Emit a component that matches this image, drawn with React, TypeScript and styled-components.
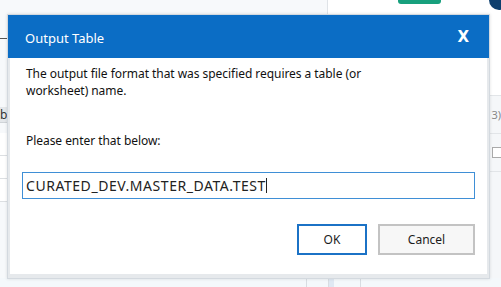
import React from "react";
import styled, {createGlobalStyle} from "styled-components";

const GlobalStyle = createGlobalStyle`
  html, body {
    margin: 0;
    padding: 0;
    background: #f5f8fb;
  }
  * {
    box-sizing: border-box;
  }
`

export default function App() {
    return (
        <>
            <GlobalStyle/>
            <Page>
                <Workspace>
                    <LeftPane>
                        <Dash/>
                        <GridHead>b</GridHead>
                        <GridRow/>
                        <GridRow/>
                        <GridRow/>
                    </LeftPane>
                    <RightPane>
                        <RightTop>
                            <RunButton/>
                            <Avatar/>
                        </RightTop>
                        <RightList>
                            <ListRow>3)</ListRow>
                            <ListRow><Check/></ListRow>
                        </RightList>
                    </RightPane>
                </Workspace>
                <BottomBar>
                    <BottomSpacer/>
                    <BottomCell width={22}/>
                    <BottomTab/>
                    <BottomCell width={27}/>
                </BottomBar>

                <Dialog>
                    <TitleBar>
                        <Title>Output Table</Title>
                        <Close>X</Close>
                    </TitleBar>
                    <Body>
                        <Message>
                            The output file format that was specified requires a table (or
                            <br/>
                            worksheet) name.
                        </Message>
                        <Prompt>Please enter that below:</Prompt>
                        <NameInput>
                            CURATED_DEV.MASTER_DATA.TEST<Caret/>
                        </NameInput>
                        <Buttons>
                            <DialogButton primary>OK</DialogButton>
                            <DialogButton>Cancel</DialogButton>
                        </Buttons>
                    </Body>
                </Dialog>
            </Page>
        </>
    )
}

const Page = styled.div`
  position: relative;
  width: 501px;
  height: 287px;
  overflow: hidden;
  display: flex;
  flex-direction: column;
  font-family: "Noto Sans", "Open Sans", Arial, sans-serif;
`

const Workspace = styled.div`
  flex: 1;
  display: flex;
`

const LeftPane = styled.div`
  width: 328px;
  background: #f7f9fb;
  border-right: 1px solid #dfe3e7;
  display: flex;
  flex-direction: column;
  padding-top: 38px;
`

const Dash = styled.div`
  width: 7px;
  height: 1px;
  background: #555;
  margin-bottom: 68px;
`

const GridHead = styled.div`
  height: 16px;
  background: #e4e7ea;
  font-size: 12px;
  line-height: 16px;
  color: #333;
  border-bottom: 1px solid #d0d4d8;
  margin-bottom: 10px;
`

const GridRow = styled.div`
  height: 23px;
  border-bottom: 1px solid #dcdfe2;
  background: #fff;
  width: 8px;
`

const RightPane = styled.div`
  flex: 1;
  display: flex;
  flex-direction: column;
  background: #fff;
`

const RightTop = styled.div`
  height: 96px;
  position: relative;
  border-bottom: 1px solid #e2e5e8;
`

const RunButton = styled.div`
  position: absolute;
  left: 70px;
  top: -6px;
  width: 43px;
  height: 10px;
  border-radius: 3px;
  background: #17a07d;
`

const Avatar = styled.div`
  position: absolute;
  right: -8px;
  top: -10px;
  width: 20px;
  height: 20px;
  border-radius: 50%;
  background: #0d3f6e;
`

const RightList = styled.div`
  flex: 1;
  background: #f5f7f9;
  display: flex;
  flex-direction: column;
`

const ListRow = styled.div`
  width: 100%;
  height: 38px;
  border-bottom: 1px solid #e2e5e8;
  font-size: 11px;
  color: #888;
  display: flex;
  align-items: center;
  justify-content: flex-end;
`

const Check = styled.span`
  display: inline-block;
  width: 9px;
  height: 11px;
  border: 1px solid #aaa;
  border-right: none;
  background: #fff;
`

const BottomBar = styled.div`
  height: 9px;
  display: flex;
  background: #f4f8fb;
`

const BottomSpacer = styled.div`
  width: 307px;
  border-right: 1px solid #d8dde2;
`

const BottomCell = styled.div<{width: number}>`
  width: ${p => p.width}px;
  border-right: 1px solid #d8dde2;
`

const BottomTab = styled.div`
  width: 5px;
  background: #dfe8f3;
`

const Dialog = styled.div`
  position: absolute;
  left: 7px;
  top: 14px;
  width: 483px;
  height: 265px;
  display: flex;
  flex-direction: column;
  border: 1px solid #d3d9df;
  background: #e6e9ec;
  box-shadow: 0 0 3px rgba(0, 0, 0, 0.12);
`

const TitleBar = styled.div`
  height: 43px;
  background: #0b6dc5;
  display: flex;
  align-items: center;
  justify-content: space-between;
  padding: 0 20px 0 17px;
  color: #fff;
`

const Title = styled.div`
  font-size: 13px;
  padding-top: 2px;
`

const Close = styled.div`
  font-size: 15px;
  font-weight: 700;
  font-family: "DejaVu Sans", sans-serif;
  padding-top: 1px;
`

const Body = styled.div`
  flex: 1;
  margin: 0 2px 4px 2px;
  background: #fff;
  display: flex;
  flex-direction: column;
  padding: 7px 12px 0 12px;
  color: #111;
`

const Message = styled.div`
  font-size: 12px;
  line-height: 17px;
  padding-left: 4px;
  letter-spacing: -0.05px;
`

const Prompt = styled.div`
  font-size: 12px;
  line-height: 17px;
  padding-left: 4px;
  margin-top: 33px;
  letter-spacing: -0.05px;
`

const NameInput = styled.div`
  margin-top: 23px;
  height: 27px;
  border: 1px solid #3f8fd6;
  font-size: 14px;
  line-height: 25px;
  padding-left: 3px;
  color: #222;
  display: flex;
  align-items: center;
  letter-spacing: 0.55px;
`

const Caret = styled.span`
  display: inline-block;
  width: 1px;
  height: 15px;
  background: #222;
  margin-left: 0;
`

const Buttons = styled.div`
  margin-top: 25px;
  display: flex;
  justify-content: flex-end;
  gap: 11px;
`

const DialogButton = styled.div<{primary?: boolean}>`
  width: ${p => p.primary ? 70 : 97}px;
  height: 31px;
  border: 2px solid ${p => p.primary ? "#1b72c6" : "#c3c3c3"};
  background: ${p => p.primary ? "#fff" : "#f7f7f7"};
  font-size: 12px;
  color: #1c1c1c;
  display: flex;
  align-items: center;
  justify-content: center;
`
